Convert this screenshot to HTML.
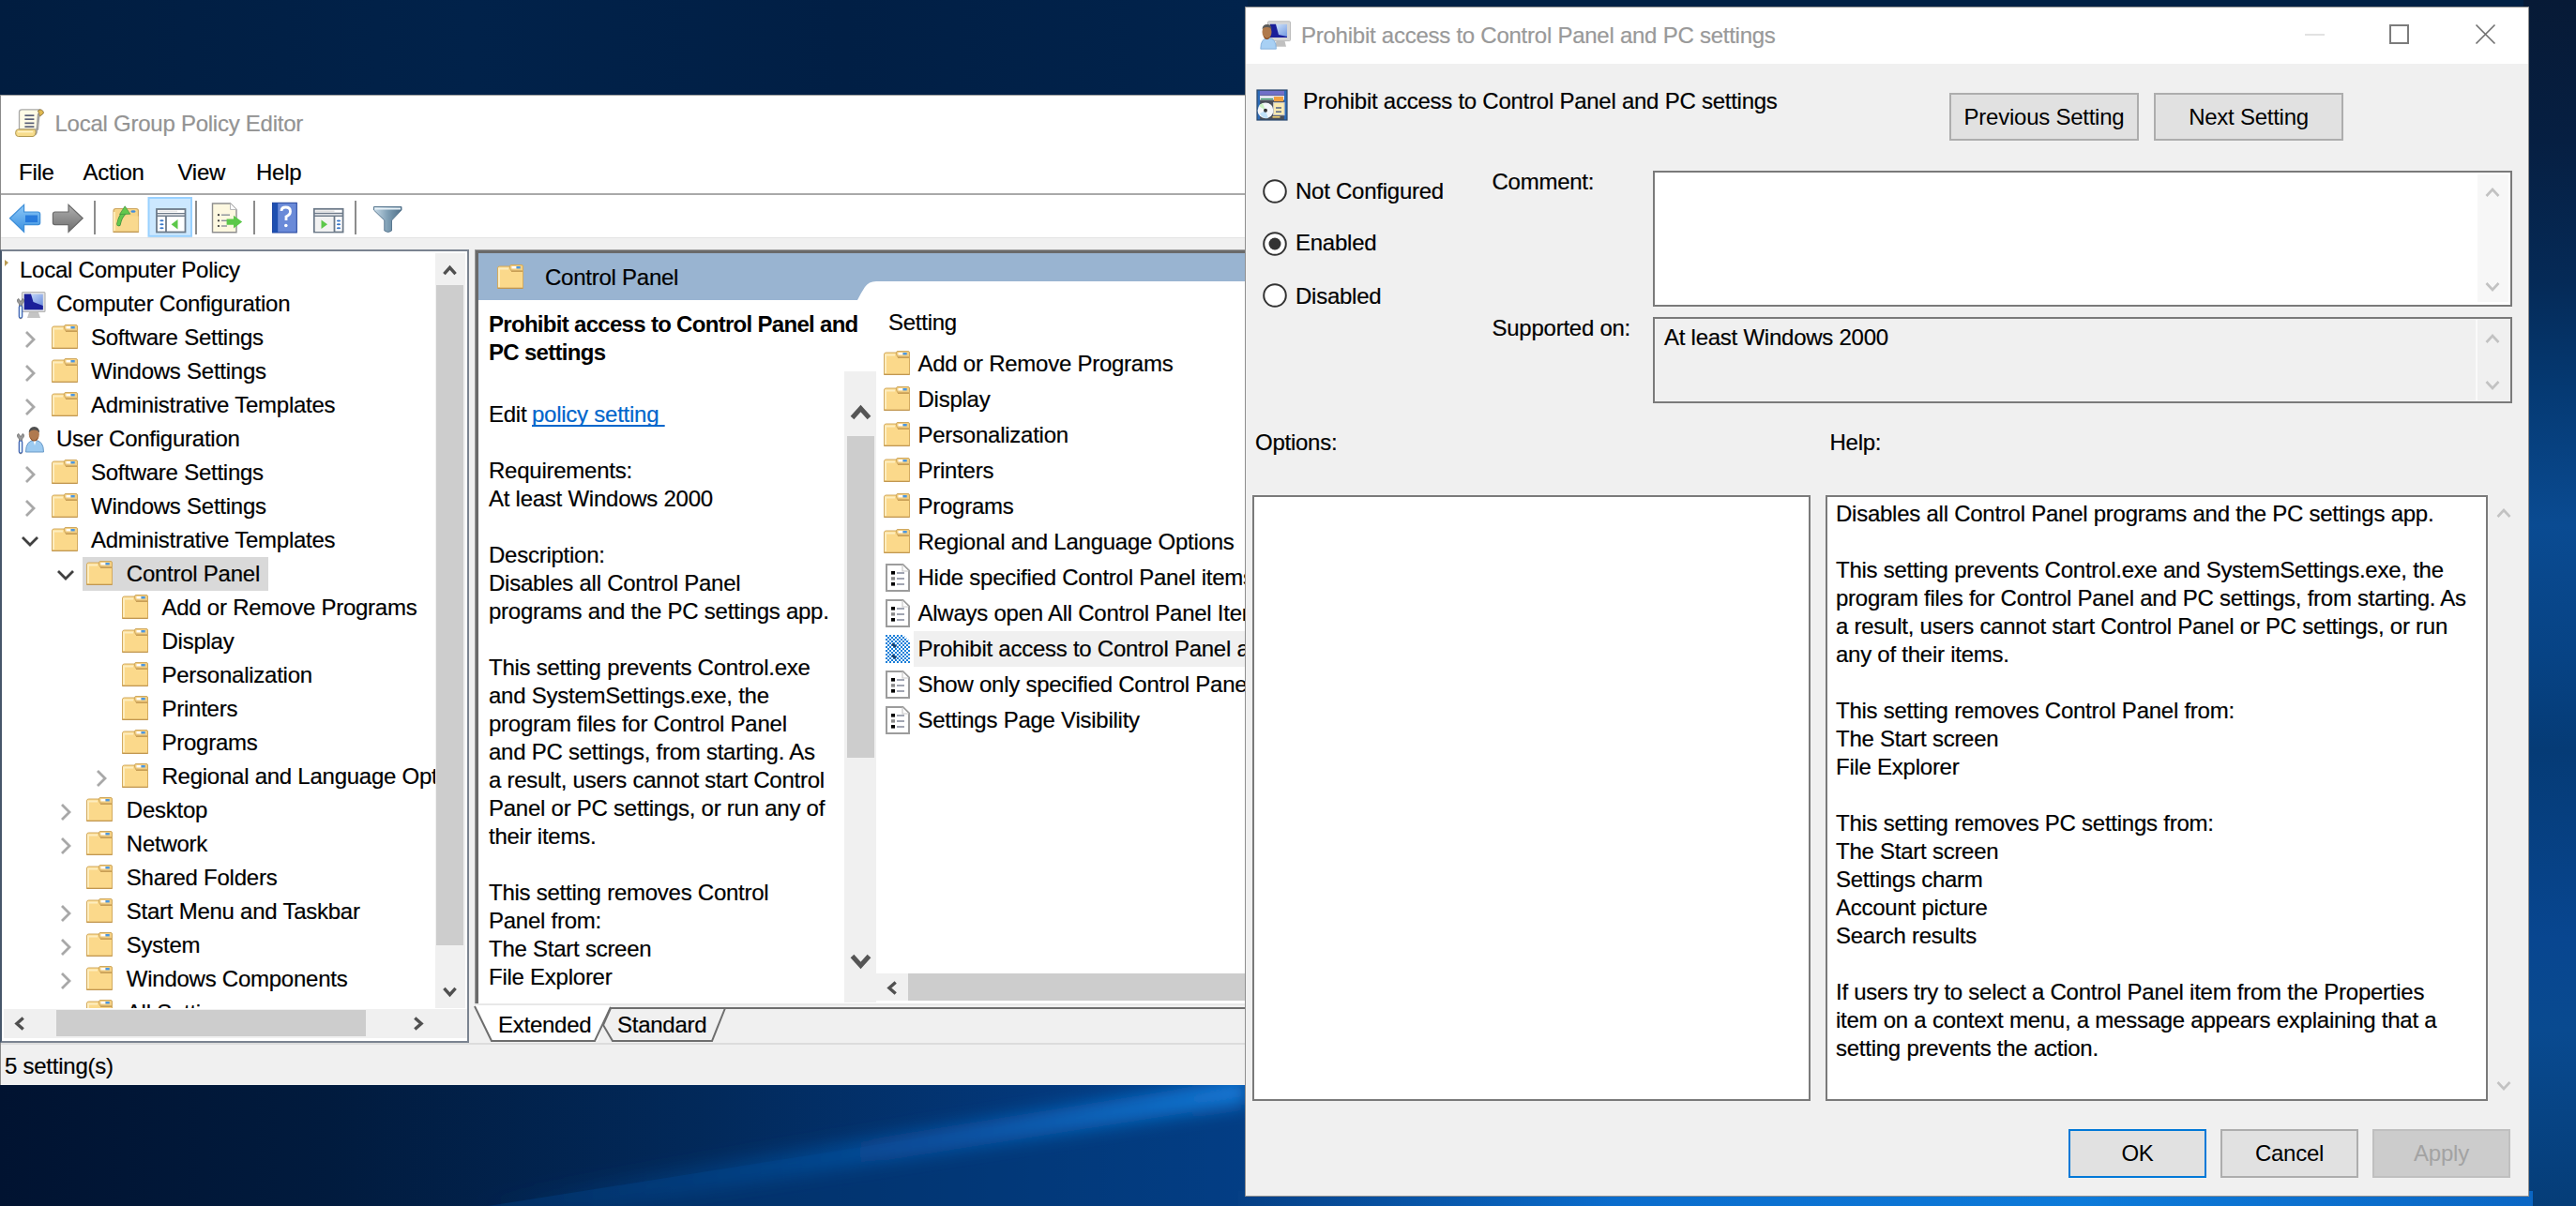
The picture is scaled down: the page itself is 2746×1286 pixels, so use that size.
<!DOCTYPE html>
<html><head><meta charset="utf-8"><title>Local Group Policy Editor</title>
<style>
*{box-sizing:border-box}
html,body{margin:0;padding:0}
body{width:2746px;height:1286px;overflow:hidden;position:relative;background:#021c42;font-family:"Liberation Sans",sans-serif;font-size:24px;color:#000}
.a{position:absolute}
.t{position:absolute;white-space:pre;letter-spacing:-0.25px;-webkit-text-stroke:0.2px currentColor}
.b{position:absolute;white-space:pre;font-weight:bold;letter-spacing:-0.7px}
.btn{position:absolute;background:#e1e1e1;border:2px solid #adadad;text-align:center;letter-spacing:-0.25px}
</style></head>
<body>

<svg width="0" height="0" style="position:absolute">
<defs>
<pattern id="chk" width="4" height="4" patternUnits="userSpaceOnUse">
<rect width="4" height="4" fill="#fff"/><rect width="2" height="2" fill="#1a7fd8"/><rect x="2" y="2" width="2" height="2" fill="#1a7fd8"/>
</pattern>
<linearGradient id="bgStreak" x1="0" y1="1" x2="1" y2="0">
<stop offset="0" stop-color="#0a3f80" stop-opacity="0"/>
<stop offset="0.5" stop-color="#0c5bb5" stop-opacity="0.8"/>
<stop offset="1" stop-color="#1181e6" stop-opacity="1"/>
</linearGradient>
<filter id="blur8"><feGaussianBlur stdDeviation="10"/></filter>
</defs>
<symbol id="fd" viewBox="0 0 28 26">
<path d="M13.5,6 V2 a1.5,1.5 0 0 1 1.5,-1.5 H26 a1.5,1.5 0 0 1 1.5,1.5 V7 Z" fill="#f2cf85" stroke="#d0a95f" stroke-width="1"/>
<rect x="15.5" y="2" width="5" height="2.4" fill="#fff"/><rect x="20.5" y="2" width="4.2" height="2.4" fill="#4a97e2"/>
<path d="M0.5,25.5 V4 a2,2 0 0 1 2,-2 H13 l1.6,4.6 H27.5 V25.5 Z" fill="#fbd98b" stroke="#d3ab60" stroke-width="1"/>
<path d="M2,24 V4.5 H12" fill="none" stroke="#fdedbf" stroke-width="2"/>
<path d="M15,7.5 H27" stroke="#c99f55" stroke-width="1"/>
<path d="M0.5,25.3 H27.5" stroke="#bf9550" stroke-width="1.2"/>
</symbol>
<symbol id="doc" viewBox="0 0 26 30">
<path d="M1,1 H18.5 L25,7.5 V29 H1 Z" fill="#fff" stroke="#9c9c9c" stroke-width="2"/>
<path d="M18,1.5 V8 H24.5" fill="#fff" stroke="#c8c8c8" stroke-width="1.2"/>
<rect x="6" y="8" width="4" height="3.6" fill="#000"/><rect x="12" y="9.2" width="8" height="1.6" fill="#8a8fa0"/>
<rect x="6" y="14.2" width="4" height="3.4" fill="#8a8a8a"/><rect x="12" y="15.2" width="8" height="1.6" fill="#8a8fa0"/>
<rect x="6" y="20" width="4" height="3.6" fill="#000"/><rect x="12" y="21.2" width="8" height="1.6" fill="#8a8fa0"/>
</symbol>
<symbol id="docsel" viewBox="0 0 26 30">
<path d="M0,0 H19 L26,7 V30 H0 Z" fill="url(#chk)"/>
<path d="M7,9.5 L11,13 M7,21.5 L11,25" stroke="#1c3d66" stroke-width="2.4"/>
</symbol>
<symbol id="chevR" viewBox="0 0 12 20"><path d="M2,2 L10,10 L2,18" fill="none" stroke="#a8a8a8" stroke-width="2.8"/></symbol>
<symbol id="chevD" viewBox="0 0 20 12"><path d="M2,2 L10,10 L18,2" fill="none" stroke="#404040" stroke-width="2.8"/></symbol>
<symbol id="sbUp" viewBox="0 0 16 12"><path d="M1.5,10.5 L8,3.2 L14.5,10.5" fill="none" stroke="#505050" stroke-width="3.6"/></symbol>
<symbol id="sbDn" viewBox="0 0 16 12"><path d="M1.5,1.5 L8,8.8 L14.5,1.5" fill="none" stroke="#505050" stroke-width="3.6"/></symbol>
<symbol id="sbL" viewBox="0 0 12 16"><path d="M10.5,1.5 L3.2,8 L10.5,14.5" fill="none" stroke="#505050" stroke-width="3.6"/></symbol>
<symbol id="sbR" viewBox="0 0 12 16"><path d="M1.5,1.5 L8.8,8 L1.5,14.5" fill="none" stroke="#505050" stroke-width="3.6"/></symbol>
<symbol id="gUp" viewBox="0 0 16 12"><path d="M1.5,10 L8,3 L14.5,10" fill="none" stroke="#c2c2c2" stroke-width="2.6"/></symbol>
<symbol id="gDn" viewBox="0 0 16 12"><path d="M1.5,2 L8,9 L14.5,2" fill="none" stroke="#c2c2c2" stroke-width="2.6"/></symbol>
</svg>

<div class="a" style="left:0;top:0;width:2746px;height:1286px;background:#012145"></div>
<div class="a" style="left:0;top:0;width:1330px;height:102px;background:linear-gradient(90deg,#011d40 0px,#01224a 500px,#011f45 900px,#01234c 1330px)"></div>
<div class="a" style="left:2690px;top:0;width:56px;height:1286px;background:linear-gradient(180deg,#071a36 0px,#061f42 150px,#052a57 300px,#053a74 420px,#0a4b92 560px,#074385 700px,#053b76 800px,#084690 1000px,#094a90 1100px,#053d78 1286px)"></div>
<div class="a" style="left:0;top:1150px;width:1330px;height:136px;background:linear-gradient(90deg,#011331 0px,#011b3e 350px,#02295a 750px,#03387a 1100px,#044290 1330px)"></div>
<svg class="a" style="left:0;top:1150px" width="1330" height="136">
<defs><linearGradient id="stk" x1="0" y1="0" x2="1" y2="0"><stop offset="0" stop-color="#0a4d98" stop-opacity="0"/><stop offset="0.6" stop-color="#0b5fb8" stop-opacity="0.7"/><stop offset="1" stop-color="#1480e0"/></linearGradient></defs>
<polygon points="520,136 1330,8 1330,136" fill="#023a7a" opacity="0.5"/>
<polygon points="480,136 1330,0 1330,26 640,136" fill="url(#stk)" filter="url(#blur8)"/>
</svg>
<div class="a" style="left:1320px;top:1270px;width:1380px;height:16px;background:linear-gradient(90deg,#053f85 0px,#0a6ccc 400px,#0d7ad9 900px,#0a66c4 1380px)"></div>
<div class="a" style="left:0px;top:101px;width:1340px;height:1056px;background:#fff;border-left:1px solid #8a8a8a;border-top:1px solid #9a9a9a"></div>
<svg class="a" style="left:10px;top:110px" width="42" height="40" viewBox="10 110 42 40">
<path d="M20.5,119.5 Q20.5,116.8 23.5,116.8 H42.5 L40.5,138 H20.5 Z" fill="#fffbe6" stroke="#a8a8a8" stroke-width="1.3"/>
<path d="M40.5,118 L42.8,116.8 Q46.8,117.5 46.3,121 L42.5,124 Z" fill="#e0b850" stroke="#8a7440" stroke-width="0.9"/>
<path d="M40.8,121 L39,141 Q38.5,143.5 36,143.8" fill="none" stroke="#9a9a9a" stroke-width="1.6"/>
<rect x="26.4" y="122.3" width="10" height="1.7" fill="#5a6078"/><rect x="26.4" y="126.3" width="10" height="1.7" fill="#5a6078"/>
<rect x="26.4" y="130.5" width="10" height="1.7" fill="#5a6078"/><rect x="26.4" y="134.3" width="10" height="1.7" fill="#5a6078"/>
<path d="M19,138 H36.5 Q38.5,138 38,141.8 Q37.5,145.5 35,145.5 H19.5 Q16.5,145.5 16.6,141.8 Q16.8,138 19,138 Z" fill="#f7dc8c" stroke="#b09850" stroke-width="1"/>
<path d="M19,140.5 H35" stroke="#fff4c8" stroke-width="1.6"/>
</svg>
<div class="t" style="left:58.5px;top:117.18px;line-height:30px;color:#939393">Local Group Policy Editor</div>
<div class="t" style="left:20.0px;top:169.18px;line-height:30px;">File</div>
<div class="t" style="left:88.5px;top:169.18px;line-height:30px;">Action</div>
<div class="t" style="left:189.5px;top:169.18px;line-height:30px;">View</div>
<div class="t" style="left:273.0px;top:169.18px;line-height:30px;">Help</div>
<div class="a" style="left:1px;top:206px;width:1339px;height:2px;background:#a9a9a9"></div>
<div class="a" style="left:1px;top:253px;width:1339px;height:1px;background:#e3e3e3"></div>
<div class="a" style="left:1px;top:254px;width:1339px;height:903px;background:#f0f0f0"></div>
<div class="a" style="left:100px;top:214px;width:2px;height:36px;background:#8c8c8c"></div>
<div class="a" style="left:208px;top:214px;width:2px;height:36px;background:#8c8c8c"></div>
<div class="a" style="left:270px;top:214px;width:2px;height:36px;background:#8c8c8c"></div>
<div class="a" style="left:378px;top:214px;width:2px;height:36px;background:#8c8c8c"></div>
<svg class="a" style="left:0px;top:208px" width="440" height="46" viewBox="0 208 440 46">
<defs>
<linearGradient id="arB" x1="0" y1="0" x2="0" y2="1"><stop offset="0" stop-color="#8cc8f8"/><stop offset="1" stop-color="#3a90e0"/></linearGradient>
<linearGradient id="arG" x1="0" y1="0" x2="0" y2="1"><stop offset="0" stop-color="#b0b0b0"/><stop offset="1" stop-color="#6e6e6e"/></linearGradient>
<linearGradient id="fun" x1="0" y1="0" x2="1" y2="0"><stop offset="0" stop-color="#c8dbe8"/><stop offset="0.5" stop-color="#7f9fb5"/><stop offset="1" stop-color="#4f6f88"/></linearGradient>
</defs>
<path d="M10.5,232.7 L25.6,218.3 V226 H40.5 a2.2,2.2 0 0 1 2.2,2.2 V237.5 a2.2,2.2 0 0 1 -2.2,2.2 H25.6 V247.3 Z" fill="url(#arB)" stroke="#3f8fd8" stroke-width="1.2"/>
<path d="M27,229.5 H40 V237 H27 Z" fill="#1a6fd8" opacity="0.8"/>
<path d="M88.2,232.7 L73,218.3 V226 H58.6 a2.2,2.2 0 0 0 -2.2,2.2 V237.5 a2.2,2.2 0 0 0 2.2,2.2 H73 V247.3 Z" fill="url(#arG)" stroke="#6a6a6a" stroke-width="1.2"/>
<path d="M121,225 a2.5,2.5 0 0 1 2.5,-2.5 H145 a2.5,2.5 0 0 1 2.5,2.5 V247.5 H121 Z" fill="#f6d486" stroke="#cda660" stroke-width="1.2"/>
<path d="M137,230.5 H147.5 V247.5 H121 V236 Z" fill="#f9d98e"/>
<path d="M122,226 V246" stroke="#fdebb5" stroke-width="2"/>
<path d="M121,247.3 H147.5" stroke="#b9914e" stroke-width="1.2"/>
<ellipse cx="142" cy="225.5" rx="2.6" ry="1.3" fill="#3f8de0"/>
<path d="M126.5,239 Q128,231 132.5,227" fill="none" stroke="#3f8f3f" stroke-width="4.6" stroke-linecap="round"/><path d="M126.5,239 Q128,231 132.5,227" fill="none" stroke="#62c84c" stroke-width="3.2" stroke-linecap="round"/><path d="M127.5,228.5 L133.2,219.8 L138.8,228.2 Z" fill="#62c84c" stroke="#3f8f3f" stroke-width="0.7"/>
<rect x="158.5" y="211" width="45.5" height="40.8" fill="#cce8ff" stroke="#99d1ff" stroke-width="2"/>
<rect x="167" y="223" width="30.5" height="24.5" fill="#fff" stroke="#6d7a89" stroke-width="1.8"/>
<path d="M167,227.6 H197.5 M167,230.3 H197.5" stroke="#6d7a89" stroke-width="1.4"/>
<rect x="169" y="224.6" width="20" height="1.6" fill="#e8e8e8"/>
<path d="M177,230.5 V247.5" stroke="#6d7a89" stroke-width="1.8"/>
<ellipse cx="172.4" cy="235.3" rx="2.2" ry="1" fill="#3a78c8"/><ellipse cx="172.4" cy="239.3" rx="2.2" ry="1" fill="#3a78c8"/><ellipse cx="172.4" cy="243.3" rx="2.2" ry="1" fill="#3a78c8"/>
<path d="M189.5,234 L182.6,239.3 L189.5,244.6 Z" fill="#5cc84a"/>
<path d="M226.5,217 H245.5 L252,223.5 V247.8 H226.5 Z" fill="#fdf8e0" stroke="#8e8e8e" stroke-width="1.4"/>
<path d="M245.5,217 V223.5 H252" fill="#fff" stroke="#b8b8b8" stroke-width="1"/>
<circle cx="233" cy="229.2" r="1.1" fill="#333"/><rect x="236" y="228.5" width="9" height="1.4" fill="#8a8f9a"/>
<circle cx="233" cy="235.3" r="1.1" fill="#333"/><rect x="236" y="234.6" width="6" height="1.4" fill="#8a8f9a"/>
<circle cx="233" cy="241" r="1.1" fill="#333"/><rect x="236" y="240.3" width="6" height="1.4" fill="#8a8f9a"/>
<path d="M241.6,233.5 H249 V229.7 L258.2,236.6 L249,243.6 V239.8 H241.6 Z" fill="#5cc84a"/>
<rect x="290.5" y="216.3" width="25.8" height="31.7" fill="#6a8ad8" stroke="#1f3f99" stroke-width="1"/>
<rect x="290.5" y="216.3" width="5.7" height="31.7" fill="#1e4fb0"/>
<path d="M300,225 Q300,221 304.5,221 Q309.5,221 309.5,225.5 Q309.5,229 305,231 V235" fill="none" stroke="#fff" stroke-width="2.8"/>
<circle cx="304.8" cy="240.5" r="1.8" fill="#fff"/>
<rect x="334.8" y="222.8" width="30.8" height="24.7" fill="#fff" stroke="#6d7a89" stroke-width="1.8"/>
<path d="M334.8,227.5 H365.6 M334.8,230.3 H365.6" stroke="#6d7a89" stroke-width="1.4"/>
<rect x="336.5" y="224.5" width="20" height="1.6" fill="#e0e0e0"/>
<rect x="336" y="231" width="20" height="16" fill="#f2f2f2"/>
<path d="M356.5,230.5 V247.5" stroke="#6d7a89" stroke-width="1.8"/>
<ellipse cx="361" cy="235.4" rx="2.2" ry="1" fill="#3a78c8"/><ellipse cx="361" cy="239.3" rx="2.2" ry="1" fill="#3a78c8"/><ellipse cx="361" cy="243.2" rx="2.2" ry="1" fill="#3a78c8"/>
<path d="M342.5,234.5 L349,239.3 L342.5,244 Z" fill="#5cc84a"/>
<path d="M398.5,220.5 H428 V224 L417.5,235 V246 Q413.7,249 409.8,246 V235 L398.5,224 Z" fill="url(#fun)" stroke="#5a7890" stroke-width="1"/>
<path d="M399.5,221.5 H427 V223.5 H399.5 Z" fill="#e8f2f8"/>
</svg>
<div class="a" style="left:0px;top:266px;width:500px;height:846px;background:#fff;border:2px solid #7a8390;border-left-color:#46566a"></div>
<div class="a" style="left:2px;top:268px;width:462px;height:807px;overflow:hidden">
<svg class="a" style="left:1px;top:8px" width="8" height="10"><path d="M2,1 L6,4 L2,8" fill="#b99a50"/></svg>
<div class="t" style="left:19.0px;top:2.18px;line-height:36px;">Local Computer Policy</div>
<svg class="a" style="left:14px;top:40px" width="34" height="34" viewBox="0 0 34 34">
<defs><linearGradient id="scr" x1="0" y1="0" x2="1" y2="1"><stop offset="0" stop-color="#d8e8ff"/><stop offset="1" stop-color="#5a7fd8"/></linearGradient></defs>
<rect x="7.5" y="3.5" width="24.5" height="21" rx="1" fill="#e2e2e2" stroke="#b4b4b4" stroke-width="1.2"/>
<rect x="9.8" y="5.6" width="20" height="16.6" fill="url(#scr)"/>
<path d="M9.8,5.6 H17 L19.5,14 L29.8,18 V22.2 H9.8 Z" fill="#1a1f9a"/>
<path d="M15,25 H25 L27,31 H13 Z" fill="#c4c4c4"/>
<path d="M2.5,13 Q2,11 4,10.5 L5,13 H7 L8,10.5 Q10,11 9.5,13 Q9,15 7.5,16 V31 Q6,33 4.5,31 V16 Q3,15 2.5,13 Z" fill="#9a9a9a" stroke="#707070" stroke-width="0.8"/>
<rect x="4.3" y="18" width="3.4" height="13" rx="1.5" fill="#dfefff" stroke="#3a5fb0" stroke-width="1.2"/>
</svg>
<div class="t" style="left:58.0px;top:38.18px;line-height:36px;">Computer Configuration</div>
<svg class="a" style="left:52.5px;top:78px;" width="28" height="26"><use href="#fd"/></svg>
<svg class="a" style="left:24.0px;top:84px;" width="12" height="20"><use href="#chevR"/></svg>
<div class="t" style="left:95.0px;top:74.18px;line-height:36px;">Software Settings</div>
<svg class="a" style="left:52.5px;top:114px;" width="28" height="26"><use href="#fd"/></svg>
<svg class="a" style="left:24.0px;top:120px;" width="12" height="20"><use href="#chevR"/></svg>
<div class="t" style="left:95.0px;top:110.18px;line-height:36px;">Windows Settings</div>
<svg class="a" style="left:52.5px;top:150px;" width="28" height="26"><use href="#fd"/></svg>
<svg class="a" style="left:24.0px;top:156px;" width="12" height="20"><use href="#chevR"/></svg>
<div class="t" style="left:95.0px;top:146.18px;line-height:36px;">Administrative Templates</div>
<svg class="a" style="left:14px;top:184px" width="34" height="34" viewBox="0 0 34 34">
<path d="M11.5,30 Q11.5,17.5 21,17.5 Q30.5,17.5 30.5,30 Z" fill="#9ccaf0" stroke="#6a9ac8" stroke-width="1"/>
<path d="M19.5,18 L21,23 L22.5,18 Z" fill="#fff"/>
<ellipse cx="20.3" cy="11" rx="5.6" ry="7" fill="#b07a50"/>
<path d="M14.7,9.5 Q15,3 20.5,3 Q26,3 26,9.5 Q24,6 20.5,6.5 Q17,6 14.7,9.5 Z" fill="#505050"/>
<path d="M16,14 Q20,21 25,14 Q24,18.5 20.3,18.5 Q17,18.5 16,14 Z" fill="#8a4a20"/>
<path d="M2.5,13 Q2,11 4,10.5 L5,13 H7 L8,10.5 Q10,11 9.5,13 Q9,15 7.5,16 V31 Q6,33 4.5,31 V16 Q3,15 2.5,13 Z" fill="#9a9a9a" stroke="#707070" stroke-width="0.8"/>
<rect x="4.3" y="18" width="3.4" height="13" rx="1.5" fill="#dfefff" stroke="#3a5fb0" stroke-width="1.2"/>
</svg>
<div class="t" style="left:58.0px;top:182.18px;line-height:36px;">User Configuration</div>
<svg class="a" style="left:52.5px;top:222px;" width="28" height="26"><use href="#fd"/></svg>
<svg class="a" style="left:24.0px;top:228px;" width="12" height="20"><use href="#chevR"/></svg>
<div class="t" style="left:95.0px;top:218.18px;line-height:36px;">Software Settings</div>
<svg class="a" style="left:52.5px;top:258px;" width="28" height="26"><use href="#fd"/></svg>
<svg class="a" style="left:24.0px;top:264px;" width="12" height="20"><use href="#chevR"/></svg>
<div class="t" style="left:95.0px;top:254.18px;line-height:36px;">Windows Settings</div>
<svg class="a" style="left:52.5px;top:294px;" width="28" height="26"><use href="#fd"/></svg>
<svg class="a" style="left:20.0px;top:303px;" width="20" height="12"><use href="#chevD"/></svg>
<div class="t" style="left:95.0px;top:290.18px;line-height:36px;">Administrative Templates</div>
<div class="a" style="left:86px;top:326px;width:198px;height:36px;background:#d9d9d9"></div>
<svg class="a" style="left:90.2px;top:330px;" width="28" height="26"><use href="#fd"/></svg>
<svg class="a" style="left:57.8px;top:339px;" width="20" height="12"><use href="#chevD"/></svg>
<div class="t" style="left:132.8px;top:326.18px;line-height:36px;">Control Panel</div>
<svg class="a" style="left:128.0px;top:366px;" width="28" height="26"><use href="#fd"/></svg>
<div class="t" style="left:170.5px;top:362.18px;line-height:36px;">Add or Remove Programs</div>
<svg class="a" style="left:128.0px;top:402px;" width="28" height="26"><use href="#fd"/></svg>
<div class="t" style="left:170.5px;top:398.18px;line-height:36px;">Display</div>
<svg class="a" style="left:128.0px;top:438px;" width="28" height="26"><use href="#fd"/></svg>
<div class="t" style="left:170.5px;top:434.18px;line-height:36px;">Personalization</div>
<svg class="a" style="left:128.0px;top:474px;" width="28" height="26"><use href="#fd"/></svg>
<div class="t" style="left:170.5px;top:470.18px;line-height:36px;">Printers</div>
<svg class="a" style="left:128.0px;top:510px;" width="28" height="26"><use href="#fd"/></svg>
<div class="t" style="left:170.5px;top:506.18px;line-height:36px;">Programs</div>
<svg class="a" style="left:128.0px;top:546px;" width="28" height="26"><use href="#fd"/></svg>
<svg class="a" style="left:99.5px;top:552px;" width="12" height="20"><use href="#chevR"/></svg>
<div class="t" style="left:170.5px;top:542.18px;line-height:36px;">Regional and Language Options</div>
<svg class="a" style="left:90.2px;top:582px;" width="28" height="26"><use href="#fd"/></svg>
<svg class="a" style="left:61.8px;top:588px;" width="12" height="20"><use href="#chevR"/></svg>
<div class="t" style="left:132.8px;top:578.18px;line-height:36px;">Desktop</div>
<svg class="a" style="left:90.2px;top:618px;" width="28" height="26"><use href="#fd"/></svg>
<svg class="a" style="left:61.8px;top:624px;" width="12" height="20"><use href="#chevR"/></svg>
<div class="t" style="left:132.8px;top:614.18px;line-height:36px;">Network</div>
<svg class="a" style="left:90.2px;top:654px;" width="28" height="26"><use href="#fd"/></svg>
<div class="t" style="left:132.8px;top:650.18px;line-height:36px;">Shared Folders</div>
<svg class="a" style="left:90.2px;top:690px;" width="28" height="26"><use href="#fd"/></svg>
<svg class="a" style="left:61.8px;top:696px;" width="12" height="20"><use href="#chevR"/></svg>
<div class="t" style="left:132.8px;top:686.18px;line-height:36px;">Start Menu and Taskbar</div>
<svg class="a" style="left:90.2px;top:726px;" width="28" height="26"><use href="#fd"/></svg>
<svg class="a" style="left:61.8px;top:732px;" width="12" height="20"><use href="#chevR"/></svg>
<div class="t" style="left:132.8px;top:722.18px;line-height:36px;">System</div>
<svg class="a" style="left:90.2px;top:762px;" width="28" height="26"><use href="#fd"/></svg>
<svg class="a" style="left:61.8px;top:768px;" width="12" height="20"><use href="#chevR"/></svg>
<div class="t" style="left:132.8px;top:758.18px;line-height:36px;">Windows Components</div>
<svg class="a" style="left:90.2px;top:798px;" width="28" height="26"><use href="#fd"/></svg>
<div class="t" style="left:132.8px;top:794.18px;line-height:36px;">All Settings</div>
</div>
<div class="a" style="left:464px;top:270px;width:32px;height:805px;background:#f0f0f0"></div>
<div class="a" style="left:465px;top:304px;width:29px;height:704px;background:#cdcdcd"></div>
<svg class="a" style="left:472px;top:282px;" width="15" height="12"><use href="#sbUp"/></svg>
<svg class="a" style="left:472px;top:1052px;" width="15" height="12"><use href="#sbDn"/></svg>
<div class="a" style="left:4px;top:1076px;width:494px;height:31px;background:#f0f0f0"></div>
<div class="a" style="left:60px;top:1077px;width:330px;height:28px;background:#cdcdcd"></div>
<svg class="a" style="left:14px;top:1084px;" width="13" height="15"><use href="#sbL"/></svg>
<svg class="a" style="left:440px;top:1084px;" width="13" height="15"><use href="#sbR"/></svg>
<div class="a" style="left:506px;top:266px;width:834px;height:806px;background:#fff;border-left:1px solid #9a9a9a;border-top:1px solid #9a9a9a"></div>
<div class="a" style="left:507px;top:267px;width:833px;height:805px;background:#fff;border-left:3px solid #6a6a6a;border-top:3px solid #6a6a6a"></div>
<div class="a" style="left:510px;top:270px;width:830px;height:50px;background:#99b4d1"></div>
<svg class="a" style="left:530px;top:282px;" width="28" height="26"><use href="#fd"/></svg>
<div class="t" style="left:581.0px;top:281.18px;line-height:30px;">Control Panel</div>
<svg class="a" style="left:908px;top:298px" width="432" height="24"><path d="M0,24 L6,22 Q10,14 14,8 Q18,2 26,2 H432 V24 Z" fill="#fff"/></svg>
<div class="b" style="left:521.0px;top:330.68px;line-height:30px;">Prohibit access to Control Panel and</div>
<div class="b" style="left:521.0px;top:360.68px;line-height:30px;">PC settings</div>
<div class="t" style="left:521.0px;top:427.08px;line-height:30px;">Edit </div>
<div class="t" style="left:567.0px;top:427.08px;line-height:30px;color:#0066cc;text-decoration:underline;text-decoration-skip-ink:none;text-underline-offset:3px">policy setting </div>
<div class="a" style="left:510px;top:320px;width:390px;height:750px;overflow:hidden">
<div class="t" style="left:11.0px;top:167.08px;line-height:30px;">Requirements:</div>
<div class="t" style="left:11.0px;top:197.08px;line-height:30px;">At least Windows 2000</div>
<div class="t" style="left:11.0px;top:257.08px;line-height:30px;">Description:</div>
<div class="t" style="left:11.0px;top:287.08px;line-height:30px;">Disables all Control Panel</div>
<div class="t" style="left:11.0px;top:317.08px;line-height:30px;">programs and the PC settings app.</div>
<div class="t" style="left:11.0px;top:377.08px;line-height:30px;">This setting prevents Control.exe</div>
<div class="t" style="left:11.0px;top:407.08px;line-height:30px;">and SystemSettings.exe, the</div>
<div class="t" style="left:11.0px;top:437.08px;line-height:30px;">program files for Control Panel</div>
<div class="t" style="left:11.0px;top:467.08px;line-height:30px;">and PC settings, from starting. As</div>
<div class="t" style="left:11.0px;top:497.08px;line-height:30px;">a result, users cannot start Control</div>
<div class="t" style="left:11.0px;top:527.08px;line-height:30px;">Panel or PC settings, or run any of</div>
<div class="t" style="left:11.0px;top:557.08px;line-height:30px;">their items.</div>
<div class="t" style="left:11.0px;top:617.08px;line-height:30px;">This setting removes Control</div>
<div class="t" style="left:11.0px;top:647.08px;line-height:30px;">Panel from:</div>
<div class="t" style="left:11.0px;top:677.08px;line-height:30px;">The Start screen</div>
<div class="t" style="left:11.0px;top:707.08px;line-height:30px;">File Explorer</div>
</div>
<div class="a" style="left:900px;top:396px;width:34px;height:673px;background:#f0f0f0"></div>
<div class="a" style="left:903px;top:465px;width:29px;height:343px;background:#cdcdcd"></div>
<svg class="a" style="left:906px;top:429px" width="23" height="19" viewBox="0 0 23 19"><path d="M2.5,16.5 L11.5,6.5 L20.5,16.5" fill="none" stroke="#555" stroke-width="5"/></svg>
<svg class="a" style="left:906px;top:1017px" width="23" height="19" viewBox="0 0 23 19"><path d="M2.5,2.5 L11.5,12.5 L20.5,2.5" fill="none" stroke="#555" stroke-width="5"/></svg>
<div class="t" style="left:947.0px;top:329.08px;line-height:30px;">Setting</div>
<svg class="a" style="left:942px;top:374px;" width="28" height="26"><use href="#fd"/></svg>
<div class="t" style="left:978.5px;top:373.28px;line-height:30px;">Add or Remove Programs</div>
<svg class="a" style="left:942px;top:412px;" width="28" height="26"><use href="#fd"/></svg>
<div class="t" style="left:978.5px;top:411.28px;line-height:30px;">Display</div>
<svg class="a" style="left:942px;top:450px;" width="28" height="26"><use href="#fd"/></svg>
<div class="t" style="left:978.5px;top:449.28px;line-height:30px;">Personalization</div>
<svg class="a" style="left:942px;top:488px;" width="28" height="26"><use href="#fd"/></svg>
<div class="t" style="left:978.5px;top:487.28px;line-height:30px;">Printers</div>
<svg class="a" style="left:942px;top:526px;" width="28" height="26"><use href="#fd"/></svg>
<div class="t" style="left:978.5px;top:525.28px;line-height:30px;">Programs</div>
<svg class="a" style="left:942px;top:564px;" width="28" height="26"><use href="#fd"/></svg>
<div class="t" style="left:978.5px;top:563.28px;line-height:30px;">Regional and Language Options</div>
<svg class="a" style="left:944px;top:601px;" width="26" height="30"><use href="#doc"/></svg>
<div class="t" style="left:978.5px;top:601.28px;line-height:30px;">Hide specified Control Panel items</div>
<svg class="a" style="left:944px;top:639px;" width="26" height="30"><use href="#doc"/></svg>
<div class="t" style="left:978.5px;top:639.28px;line-height:30px;">Always open All Control Panel Items when opening Control Panel</div>
<div class="a" style="left:974px;top:673px;width:366px;height:38px;background:#f0f0f0"></div>
<svg class="a" style="left:944px;top:677px;" width="26" height="30"><use href="#docsel"/></svg>
<div class="t" style="left:978.5px;top:677.28px;line-height:30px;">Prohibit access to Control Panel and PC settings</div>
<svg class="a" style="left:944px;top:715px;" width="26" height="30"><use href="#doc"/></svg>
<div class="t" style="left:978.5px;top:715.28px;line-height:30px;">Show only specified Control Panel items</div>
<svg class="a" style="left:944px;top:753px;" width="26" height="30"><use href="#doc"/></svg>
<div class="t" style="left:978.5px;top:753.28px;line-height:30px;">Settings Page Visibility</div>
<div class="a" style="left:934px;top:1038px;width:406px;height:29px;background:#f0f0f0"></div>
<div class="a" style="left:968px;top:1038px;width:372px;height:29px;background:#cdcdcd"></div>
<svg class="a" style="left:944px;top:1046px;" width="13" height="15"><use href="#sbL"/></svg>
<div class="a" style="left:506px;top:1070px;width:834px;height:42px;background:#f0f0f0"></div>
<div class="a" style="left:506px;top:1070px;width:834px;height:2px;background:#e8e8e8"></div>
<svg class="a" style="left:500px;top:1068px" width="840" height="46">
<path d="M6,4 H150 L137,42 H24 Z" fill="#fff"/>
<path d="M6,5 L24,42 H134 L151,6" fill="none" stroke="#6e6e6e" stroke-width="2"/>
<path d="M151,7 H273 L259,42 H153 L143,25 Z" fill="#f0f0f0"/>
<path d="M151,7 H273 M273,7 L259,42 H153 L143,25 L151,7" fill="none" stroke="#6e6e6e" stroke-width="2"/>
<path d="M273,7 H840" stroke="#6e6e6e" stroke-width="2"/>
</svg>
<div class="t" style="left:531.0px;top:1078.18px;line-height:30px;">Extended</div>
<div class="t" style="left:658.0px;top:1078.18px;line-height:30px;">Standard</div>
<div class="a" style="left:1px;top:1112px;width:1339px;height:2px;background:#dcdcdc"></div>
<div class="t" style="left:5.0px;top:1122.18px;line-height:30px;">5 setting(s)</div>
<div class="a" style="left:1327px;top:7px;width:1369px;height:1269px;background:#f0f0f0;border:1px solid #8f8f8f"></div>
<div class="a" style="left:1328px;top:8px;width:1367px;height:60px;background:#fff"></div>
<svg class="a" style="left:1336px;top:16px" width="46" height="42" viewBox="1336 16 46 42">
<defs><linearGradient id="scr2" x1="0" y1="0" x2="1" y2="1"><stop offset="0" stop-color="#e0f0ff"/><stop offset="1" stop-color="#6f96e0"/></linearGradient></defs>
<rect x="1351.5" y="22.8" width="24" height="20.8" rx="1" fill="#d6d6d6" stroke="#bcbcbc" stroke-width="1"/>
<rect x="1353.8" y="25.8" width="18.2" height="14.2" fill="url(#scr2)"/>
<path d="M1353.8,25.8 H1360 L1363,37 L1372,39 V40 H1353.8 Z" fill="#1a1f9a"/>
<path d="M1360.5,43.8 H1369.5 L1371,49.8 H1359 Z" fill="#c0c0c0"/>
<path d="M1343.8,52.2 Q1343.8,40.5 1352,40.5 Q1360.4,40.5 1360.4,52.2 Z" fill="#a8d0f4" stroke="#7aa8d8" stroke-width="0.8"/>
<ellipse cx="1350.5" cy="34" rx="5" ry="7.6" fill="#b07a4c"/>
<path d="M1345.5,31 Q1346,26 1350.8,26 Q1355.5,26 1355.5,31 Q1353,28.5 1350.5,29 Q1348,28.5 1345.5,31 Z" fill="#5a5a5a"/>
<path d="M1347,38 Q1350.5,43.5 1354.5,38 Q1353.5,42 1350.5,42 Q1347.5,42 1347,38 Z" fill="#8a4a20"/>
</svg>
<div class="t" style="left:1387.0px;top:22.88px;line-height:30px;color:#999">Prohibit access to Control Panel and PC settings</div>
<div class="a" style="left:2457px;top:36px;width:21px;height:2px;background:#e2e2e2"></div>
<div class="a" style="left:2547px;top:26px;width:21px;height:21px;border:2px solid #7c7c7c"></div>
<svg class="a" style="left:2638px;top:25px" width="24" height="24"><path d="M1.5,1.5 L21.5,21.5 M21.5,1.5 L1.5,21.5" stroke="#6e6e6e" stroke-width="1.6"/></svg>
<svg class="a" style="left:1336px;top:92px" width="42" height="42" viewBox="1336 92 42 42">
<rect x="1340" y="96" width="32" height="32" fill="#4a4e58" stroke="#2a4a70" stroke-width="1.2"/>
<rect x="1340.6" y="96.6" width="2.6" height="30.8" fill="#2a6ab8"/><rect x="1368.8" y="96.6" width="2.6" height="30.8" fill="#2a6ab8"/>
<rect x="1343" y="96.8" width="26" height="4.8" fill="#7070c8"/>
<rect x="1343" y="102" width="26" height="4.6" fill="#dfe3ec"/>
<rect x="1344" y="105" width="13" height="1.2" fill="#3a9a6a"/>
<rect x="1358" y="103" width="10" height="5" fill="#f0a040"/>
<circle cx="1349" cy="117.8" r="8.4" fill="#f4f6fa"/>
<path d="M1349,117.8 L1342,113 A8.4,8.4 0 0 1 1346,110 Z" fill="#c8f0c0"/><path d="M1349,117.8 L1343,121 A8.4,8.4 0 0 0 1352,126 Z" fill="#c0e0f8"/>
<circle cx="1349" cy="117.8" r="2" fill="#333"/>
<rect x="1357.6" y="109.4" width="11.5" height="13.3" fill="#fbeab0" stroke="#c8c8c8" stroke-width="1"/>
<rect x="1360" y="114.2" width="6" height="1.6" fill="#5a6a8a"/><rect x="1360" y="118.4" width="6" height="1.6" fill="#5a6a8a"/>
<rect x="1356.5" y="124" width="8" height="1.6" fill="#f0d070"/>
</svg>
<div class="t" style="left:1389.0px;top:92.68px;line-height:30px;">Prohibit access to Control Panel and PC settings</div>
<div class="btn" style="left:2078px;top:99px;width:202px;height:51px;line-height:47px">Previous Setting</div>
<div class="btn" style="left:2296px;top:99px;width:202px;height:51px;line-height:47px">Next Setting</div>
<svg class="a" style="left:1345px;top:189.7px" width="28" height="28"><circle cx="14" cy="14" r="11.8" fill="#fff" stroke="#333" stroke-width="2"/></svg>
<div class="t" style="left:1381.0px;top:188.68px;line-height:30px;">Not Configured</div>
<svg class="a" style="left:1345px;top:245.8px" width="28" height="28"><circle cx="14" cy="14" r="11.8" fill="#fff" stroke="#333" stroke-width="2"/><circle cx="14" cy="14" r="6.5" fill="#333"/></svg>
<div class="t" style="left:1381.0px;top:244.48px;line-height:30px;">Enabled</div>
<svg class="a" style="left:1345px;top:301.2px" width="28" height="28"><circle cx="14" cy="14" r="11.8" fill="#fff" stroke="#333" stroke-width="2"/></svg>
<div class="t" style="left:1381.0px;top:300.88px;line-height:30px;">Disabled</div>
<div class="t" style="left:1590.5px;top:179.08px;line-height:30px;">Comment:</div>
<div class="a" style="left:1762px;top:182px;width:916px;height:145px;background:#fff;border:2px solid #7a7a7a"></div>
<div class="a" style="left:2641px;top:186px;width:33px;height:136px;background:#f7f7f7"></div>
<svg class="a" style="left:2649px;top:199px;" width="16" height="12"><use href="#gUp"/></svg>
<svg class="a" style="left:2649px;top:300px;" width="16" height="12"><use href="#gDn"/></svg>
<div class="t" style="left:1590.5px;top:334.68px;line-height:30px;">Supported on:</div>
<div class="a" style="left:1762px;top:338px;width:916px;height:92px;background:#f0f0f0;border:2px solid #7a7a7a"></div>
<div class="a" style="left:2639px;top:341px;width:2px;height:86px;background:#fafafa"></div>
<svg class="a" style="left:2649px;top:355px;" width="16" height="12"><use href="#gUp"/></svg>
<svg class="a" style="left:2649px;top:405px;" width="16" height="12"><use href="#gDn"/></svg>
<div class="t" style="left:1774.0px;top:344.68px;line-height:30px;">At least Windows 2000</div>
<div class="t" style="left:1338.0px;top:456.68px;line-height:30px;">Options:</div>
<div class="t" style="left:1950.5px;top:456.68px;line-height:30px;">Help:</div>
<div class="a" style="left:1335px;top:528px;width:595px;height:646px;background:#fff;border:2px solid #7a7a7a"></div>
<div class="a" style="left:1946px;top:528px;width:706px;height:646px;background:#fff;border:2px solid #7a7a7a"></div>
<div class="t" style="left:1957.0px;top:532.98px;line-height:30px;">Disables all Control Panel programs and the PC settings app.</div>
<div class="t" style="left:1957.0px;top:592.98px;line-height:30px;">This setting prevents Control.exe and SystemSettings.exe, the</div>
<div class="t" style="left:1957.0px;top:622.98px;line-height:30px;">program files for Control Panel and PC settings, from starting. As</div>
<div class="t" style="left:1957.0px;top:652.98px;line-height:30px;">a result, users cannot start Control Panel or PC settings, or run</div>
<div class="t" style="left:1957.0px;top:682.98px;line-height:30px;">any of their items.</div>
<div class="t" style="left:1957.0px;top:742.98px;line-height:30px;">This setting removes Control Panel from:</div>
<div class="t" style="left:1957.0px;top:772.98px;line-height:30px;">The Start screen</div>
<div class="t" style="left:1957.0px;top:802.98px;line-height:30px;">File Explorer</div>
<div class="t" style="left:1957.0px;top:862.98px;line-height:30px;">This setting removes PC settings from:</div>
<div class="t" style="left:1957.0px;top:892.98px;line-height:30px;">The Start screen</div>
<div class="t" style="left:1957.0px;top:922.98px;line-height:30px;">Settings charm</div>
<div class="t" style="left:1957.0px;top:952.98px;line-height:30px;">Account picture</div>
<div class="t" style="left:1957.0px;top:982.98px;line-height:30px;">Search results</div>
<div class="t" style="left:1957.0px;top:1042.98px;line-height:30px;">If users try to select a Control Panel item from the Properties</div>
<div class="t" style="left:1957.0px;top:1072.98px;line-height:30px;">item on a context menu, a message appears explaining that a</div>
<div class="t" style="left:1957.0px;top:1102.98px;line-height:30px;">setting prevents the action.</div>
<svg class="a" style="left:2661px;top:541px;" width="16" height="12"><use href="#gUp"/></svg>
<svg class="a" style="left:2661px;top:1152px;" width="16" height="12"><use href="#gDn"/></svg>
<div class="btn" style="left:2205px;top:1204px;width:147px;height:52px;line-height:48px;border-color:#0078d7">OK</div>
<div class="btn" style="left:2367px;top:1204px;width:147px;height:52px;line-height:48px">Cancel</div>
<div class="btn" style="left:2529px;top:1204px;width:147px;height:52px;line-height:48px;background:#cccccc;border-color:#bfbfbf;color:#a3a3a3">Apply</div>
</body></html>
